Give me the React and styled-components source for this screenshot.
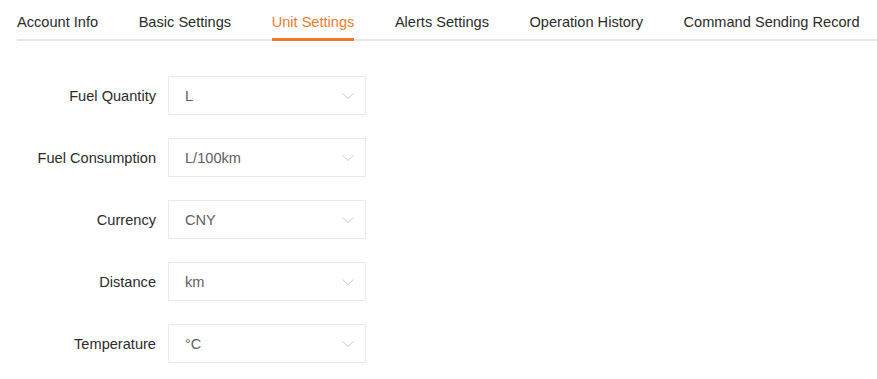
import React from "react";
import styled, { createGlobalStyle } from "styled-components";

const GlobalStyle = createGlobalStyle`
  body {
    margin: 0;
    background: #fff;
    font-family: "Liberation Sans", Arial, sans-serif;
  }
`;

const Page = styled("div")`
  padding: 0 0 0 17px;
`;

const TabBar = styled("nav")`
  display: flex;
  gap: 40.5px;
  height: 41px;
  border-bottom: 2px solid #e6e6e6;
  box-sizing: border-box;
`;

const Tab = styled("div")`
  display: flex;
  align-items: center;
  height: 41px;
  padding: 8px 0 2px;
  box-sizing: border-box;
  font-size: 14.6px;
  color: ${(p) => (p.active ? "#ef7b2b" : "#2b2b2b")};
  border-bottom: 3px solid ${(p) => (p.active ? "#ef7b2b" : "transparent")};
  margin-bottom: -2px;
  white-space: nowrap;
`;

const Form = styled("form")`
  display: flex;
  flex-direction: column;
  gap: 23px;
  padding-top: 35px;
`;

const Row = styled("div")`
  display: flex;
  align-items: center;
`;

const Label = styled("label")`
  width: 139px;
  text-align: right;
  padding-right: 12px;
  font-size: 14.6px;
  color: #2b2b2b;
`;

const Select = styled("div")`
  width: 198px;
  height: 39px;
  box-sizing: border-box;
  border: 1px solid #ebebeb;
  display: flex;
  align-items: center;
  justify-content: space-between;
  padding: 0 10px 0 16px;
  font-size: 14.6px;
  color: #606060;
`;

const Chevron = () => (
  <svg width="14" height="8" viewBox="0 0 14 8" fill="none">
    <path d="M1.5 1.5l5.5 5 5.5-5" stroke="#cccccc" strokeWidth="1" />
  </svg>
);

const tabs = [
  "Account Info",
  "Basic Settings",
  "Unit Settings",
  "Alerts Settings",
  "Operation History",
  "Command Sending Record",
];

const fields = [
  { label: "Fuel Quantity", value: "L" },
  { label: "Fuel Consumption", value: "L/100km" },
  { label: "Currency", value: "CNY" },
  { label: "Distance", value: "km" },
  { label: "Temperature", value: "°C" },
];

export default function App() {
  return (
    <Page>
      <GlobalStyle />
      <TabBar>
        {tabs.map((t) => (
          <Tab key={t} active={t === "Unit Settings"}>
            {t}
          </Tab>
        ))}
      </TabBar>
      <Form>
        {fields.map(({ label, value }) => (
          <Row key={label}>
            <Label>{label}</Label>
            <Select>
              {value}
              <Chevron />
            </Select>
          </Row>
        ))}
      </Form>
    </Page>
  );
}
